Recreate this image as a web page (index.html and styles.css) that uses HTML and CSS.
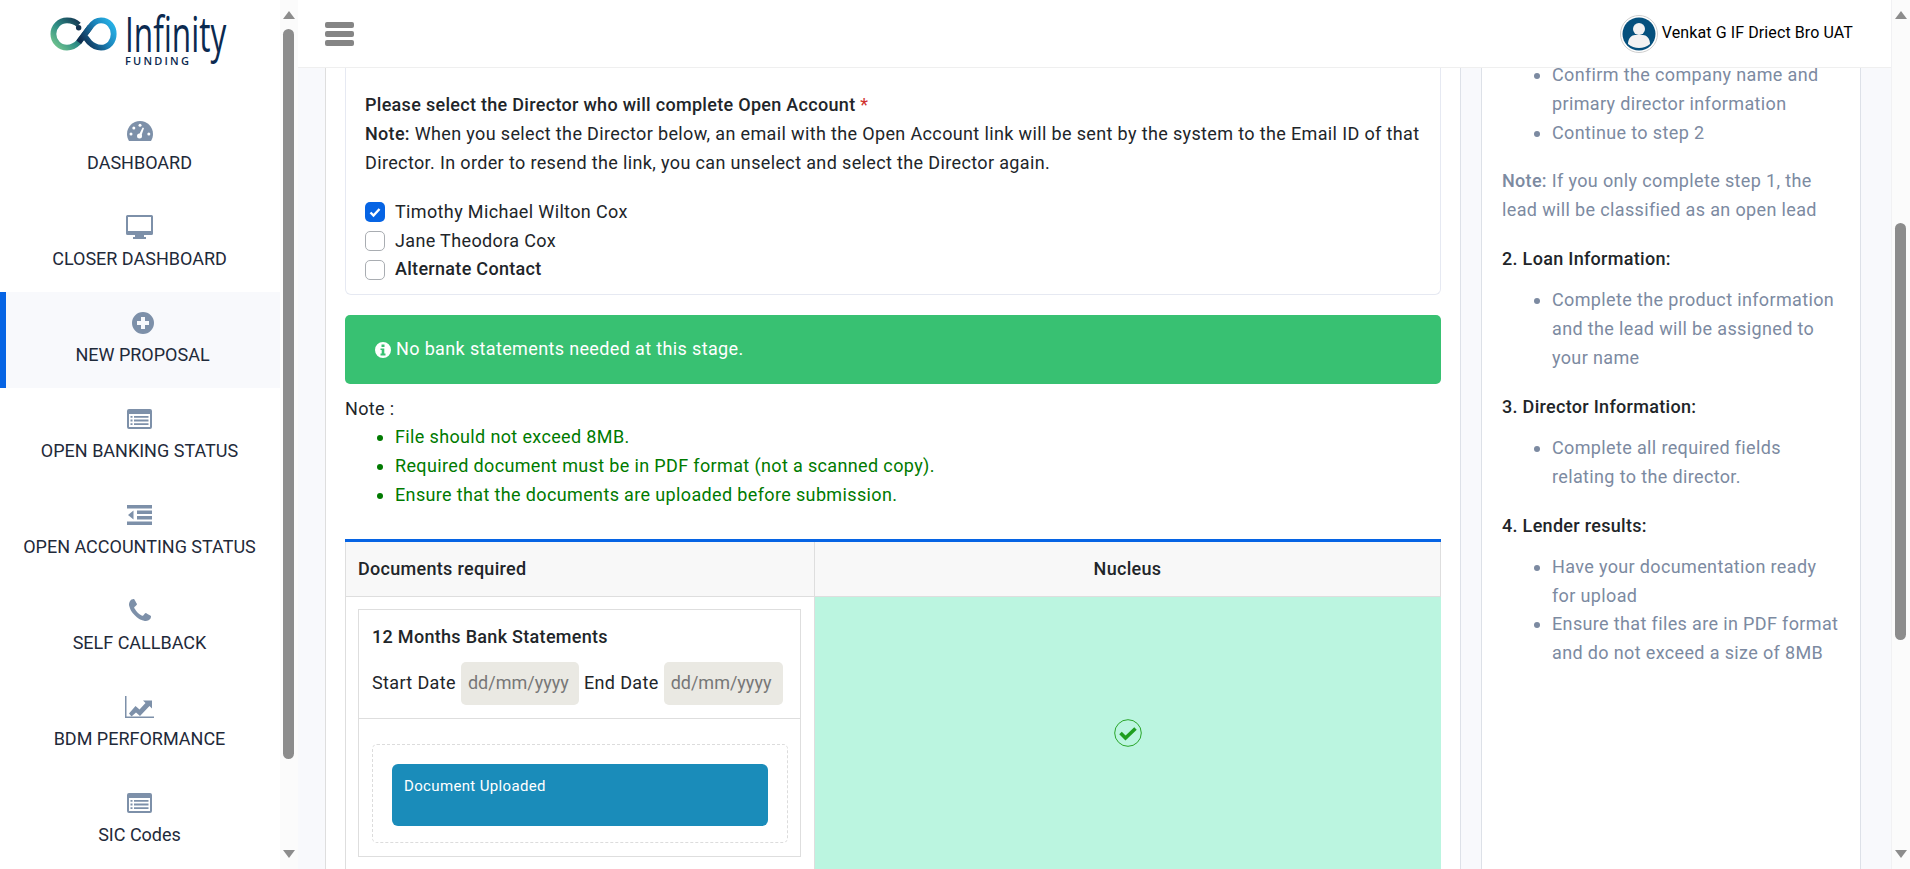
FILE: index.html
```html
<!DOCTYPE html>
<html lang="en">
<head>
<meta charset="utf-8">
<title>Infinity Funding</title>
<link rel="stylesheet" href="styles.css">
</head>
<body>
<aside class="sidebar">
  <div class="nav">
    <div class="logo">
      <svg class="logo-mark" viewBox="0 0 70 36" width="70" height="36" aria-hidden="true">
        <defs>
          <linearGradient id="lg1" gradientUnits="userSpaceOnUse" x1="5" y1="32" x2="32" y2="4"><stop offset="0" stop-color="#74c68e"/><stop offset=".45" stop-color="#2f8f86"/><stop offset="1" stop-color="#12304f"/></linearGradient>
          <linearGradient id="lg2" gradientUnits="userSpaceOnUse" x1="32" y1="26" x2="62" y2="6"><stop offset="0" stop-color="#0f2c4e"/><stop offset=".6" stop-color="#1b82b8"/><stop offset="1" stop-color="#26ade2"/></linearGradient>
        </defs>
        <path d="M29 8C26 5 22 3.500 17 3.500C9 3.500 3 10 3 17.500C3 25 9 31.500 17 31.500C22 31.500 26 29 29 26L41 10" fill="none" stroke="url(#lg1)" stroke-width="6"/>
        <path d="M29 26L41 10C44 6 48 3.500 52 3.500C60 3.500 65 10 65 17.500C65 25 60 31.500 52 31.500C47 31.500 43 29 40 26L36 21" fill="none" stroke="url(#lg2)" stroke-width="6"/>
        <circle cx="29" cy="11" r="2.800" fill="#14324f"/>
      </svg>
      <div class="logo-type">
        <span class="logo-name">Infinity</span>
        <span class="logo-sub">FUNDING</span>
      </div>
    </div>
    <a class="nav-item">
      <svg class="ico" viewBox="0 0 26 20" width="26" height="20"><path d="M13 0C5.800 0 0 5.800 0 13c0 2.500.7 4.900 2 7h22c1.300-2.100 2-4.500 2-7C26 5.800 20.200 0 13 0z"/><g fill="#fff"><circle cx="4" cy="13" r="1.500"/><circle cx="6.800" cy="7" r="1.500"/><circle cx="13" cy="4.200" r="1.500"/><circle cx="21.800" cy="13" r="1.500"/><circle cx="12.500" cy="15" r="2.500"/><path d="M15.600 6.500l1.400.4-2.900 8.500-2.400-.8z"/></g></svg>
      <span>DASHBOARD</span>
    </a>
    <a class="nav-item">
      <svg class="ico" viewBox="0 0 27 24" width="27" height="24"><path fill-rule="evenodd" d="M1.500 0h24A1.500 1.500 0 0 1 27 1.500v17a1.500 1.500 0 0 1-1.500 1.500h-24A1.500 1.500 0 0 1 0 18.500v-17A1.500 1.500 0 0 1 1.500 0zM2 2v14h23V2z"/><path d="M9 20h9v2h2v2H7v-2h2z"/></svg>
      <span>CLOSER DASHBOARD</span>
    </a>
    <a class="nav-item active">
      <svg class="ico" viewBox="0 0 22 22" width="22" height="22"><path fill-rule="evenodd" d="M11 0a11 11 0 1 1 0 22a11 11 0 0 1 0-22zM9 5v4H5v4h4v4h4v-4h4V9h-4V5z"/></svg>
      <span>NEW PROPOSAL</span>
    </a>
    <a class="nav-item">
      <svg class="ico" viewBox="0 0 25 20" width="25" height="20"><path fill-rule="evenodd" d="M2 0h21a2 2 0 0 1 2 2v16a2 2 0 0 1-2 2H2a2 2 0 0 1-2-2V2a2 2 0 0 1 2-2zM2 5v13h21V5z"/><path d="M3.500 7h2v1.800h-2zM7 7h14.500v1.800H7zM3.500 10.600h2v1.800h-2zM7 10.600h14.500v1.800H7zM3.500 14.200h2V16h-2zM7 14.200h14.500V16H7z"/></svg>
      <span>OPEN BANKING STATUS</span>
    </a>
    <a class="nav-item">
      <svg class="ico" viewBox="0 0 25 20" width="25" height="20"><path d="M0 0h25v3.500H0zM10 5.500h15V9H10zM10 11h15v3.500H10zM0 16.500h25V20H0zM6.500 5.500v9L1 10z"/></svg>
      <span>OPEN ACCOUNTING STATUS</span>
    </a>
    <a class="nav-item">
      <svg class="ico" viewBox="0 256 1408 1280" width="22" height="20"><path d="M1408 1240q0 27-10 70.500t-21 68.500q-21 50-122 106-94 51-186 51-27 0-53-3.500t-57.500-12.500-47-14.500-55.500-20.500-49-18q-98-35-175-83-127-79-264-216t-216-264q-48-77-83-175-3-9-18-49t-20.500-55.500-14.500-47-12.500-57.500-3.500-53q0-92 51-186 56-101 106-122 25-11 68.500-21t70.500-10q14 0 21 3 18 6 53 76 11 19 30 54t35 63.500 31 53.500q3 4 17.500 25t21.500 35.500 7 28.500q0 20-28.500 50t-62 55-62 53-28.500 46q0 9 5 22.500t8.500 20.500 14 24 11.500 19q76 137 174 235t235 174q2 1 19 11.500t24 14 20.500 8.500 22.500 5q18 0 46-28.500t53-62 55-62 50-28.500q14 0 28.500 7t35.500 21.500 25 17.500q25 15 53.500 31t63.500 35 54 30q70 35 76 53 3 7 3 21z"/></svg>
      <span>SELF CALLBACK</span>
    </a>
    <a class="nav-item">
      <svg class="ico" viewBox="0 0 29 22" width="29" height="22"><path d="M0 0h1.500v20.500H29V22H0z"/><path d="M4 17.500l6.500-7.500 4 3.500 6-6.500-2.500-2.500H27v8l-2.500-2.500-9.500 10-4-3.500-4.500 4z"/></svg>
      <span>BDM PERFORMANCE</span>
    </a>
    <a class="nav-item">
      <svg class="ico" viewBox="0 0 25 20" width="25" height="20"><path fill-rule="evenodd" d="M2 0h21a2 2 0 0 1 2 2v16a2 2 0 0 1-2 2H2a2 2 0 0 1-2-2V2a2 2 0 0 1 2-2zM2 5v13h21V5z"/><path d="M3.500 7h2v1.800h-2zM7 7h14.500v1.800H7zM3.500 10.600h2v1.800h-2zM7 10.600h14.500v1.800H7zM3.500 14.200h2V16h-2zM7 14.200h14.500V16H7z"/></svg>
      <span>SIC Codes</span>
    </a>
  </div>
  <div class="scrollbar scrollbar-nav">
    <i class="arrow-up"></i>
    <i class="thumb"></i>
    <i class="arrow-down"></i>
  </div>
</aside>

<div class="main">
  <header class="topbar">
    <div class="burger"><i></i><i></i><i></i></div>
    <div class="user">
      <svg class="avatar" viewBox="0 0 38 38" width="38" height="38"><circle cx="19" cy="19" r="18.500" fill="#fff" stroke="#cfcfcf"/><circle cx="19" cy="19" r="16.500" fill="#05507d"/><circle cx="19" cy="14" r="6" fill="#f2f2f2"/><path d="M8 29c0-6 4-9 7-9h8c3 0 7 3 7 9-3 2.500-7 4-11 4s-8-1.500-11-4z" fill="#f2f2f2"/></svg>
      <span>Venkat G IF Driect Bro UAT</span>
    </div>
  </header>
  <div class="workspace">
    <section class="center">
      <div class="director-card">
        <p class="line strong">Please select the Director who will complete Open Account <em>*</em></p>
        <p class="line"><strong>Note:</strong> When you select the Director below, an email with the Open Account link will be sent by the system to the Email ID of that Director. In order to resend the link, you can unselect and select the Director again.</p>
        <div class="checks">
          <label class="check"><i class="box on"><svg viewBox="0 0 20 20" width="20" height="20"><path d="M5.500 10.500l3 3 6-6.500" fill="none" stroke="#fff" stroke-width="2.400"/></svg></i>Timothy Michael Wilton Cox</label>
          <label class="check"><i class="box"></i>Jane Theodora Cox</label>
          <label class="check strong"><i class="box"></i>Alternate Contact</label>
        </div>
      </div>

      <div class="alert">
        <svg viewBox="0 0 16 16" width="16" height="16"><path fill="#fff" fill-rule="evenodd" d="M8 0a8 8 0 1 1 0 16A8 8 0 0 1 8 0zM6.500 2.500v2.500h3V2.500zM5.500 6.500v1.600h1.200v3.500H5.500v1.800h5v-1.800H9.300V6.500z"/></svg>
        <span>No bank statements needed at this stage.</span>
      </div>

      <p class="line note-title">Note :</p>
      <ul class="note-list">
        <li>File should not exceed 8MB.</li>
        <li>Required document must be in PDF format (not a scanned copy).</li>
        <li>Ensure that the documents are uploaded before submission.</li>
      </ul>

      <div class="docs">
        <div class="docs-head">
          <div class="docs-th left">Documents required</div>
          <div class="docs-th right">Nucleus</div>
        </div>
        <div class="docs-body">
          <div class="docs-left">
            <div class="doc-box">
              <div class="doc-top">
                <h4>12 Months Bank Statements</h4>
                <div class="dates">
                  <span>Start Date</span><span class="date">dd/mm/yyyy</span>
                  <span>End Date</span><span class="date">dd/mm/yyyy</span>
                </div>
              </div>
              <div class="doc-bottom">
                <div class="dropzone">
                  <div class="uploaded">Document Uploaded</div>
                </div>
              </div>
            </div>
          </div>
          <div class="docs-right">
            <svg viewBox="0 0 28 28" width="28" height="28"><circle cx="14" cy="14" r="13.300" fill="none" stroke="#2aa52a" stroke-width="1"/><path d="M6.500 14l5 5 10-9.500" fill="none" stroke="#1f9e1f" stroke-width="3.600"/></svg>
          </div>
        </div>
      </div>
    </section>

    <aside class="help">
      <ul class="help-list first">
        <li>Confirm the company name and primary director information</li>
        <li>Continue to step 2</li>
      </ul>
      <p class="help-note"><strong>Note:</strong> If you only complete step 1, the lead will be classified as an open lead</p>
      <h5>2. Loan Information:</h5>
      <ul class="help-list">
        <li>Complete the product information and the lead will be assigned to your name</li>
      </ul>
      <h5>3. Director Information:</h5>
      <ul class="help-list">
        <li>Complete all required fields relating to the director.</li>
      </ul>
      <h5>4. Lender results:</h5>
      <ul class="help-list">
        <li>Have your documentation ready for upload</li>
        <li>Ensure that files are in PDF format and do not exceed a size of 8MB</li>
      </ul>
    </aside>
  </div>
</div>

<div class="scrollbar scrollbar-page">
  <i class="arrow-up"></i>
  <i class="thumb"></i>
  <i class="arrow-down"></i>
</div>
</body>
</html>
```

FILE: styles.css
```css
* { box-sizing: border-box; }
html, body { height: 100%; }
body {
  margin: 0;
  display: flex;
  overflow: hidden;
  background: #f8f9fc;
  color: #212529;
  font: 18px/28.800px Roboto, "Liberation Sans", sans-serif;
  letter-spacing: .36px;
}
p, h4, h5, ul { margin: 0; }

/* sidebar */
.sidebar { width: 298px; flex: none; display: flex; height: 869px; }
.nav { width: 280px; background: #fff; flex: none; letter-spacing: 0; }
.logo { height: 100px; display: flex; padding: 15px 0 0 50px; gap: 6px; align-items: flex-start; }
.logo-mark { flex: none; margin-top: 2px; width: 69px; height: 35px; }
.logo-type { display: flex; flex-direction: column; color: #0b2a50; }
.logo-name {
  font: 500 49px/36px "Open Sans", sans-serif;
  transform: scaleX(.645);
  transform-origin: left top;
  width: 103px;
  white-space: nowrap;
}
.logo-sub {
  font: 600 11px/11px "Open Sans", sans-serif;
  letter-spacing: 2.200px;
  margin-top: 4px;
}
.nav-item {
  height: 96px;
  display: flex;
  flex-direction: column;
  align-items: center;
  border-left: 6px solid transparent;
  padding: 19px 1px 0 0;
  margin-left: -6px;
  white-space: nowrap;
  color: #1f2a3a;
}
.nav-item.active {
  background: #f8f9fc;
  border-left-color: #0664e4;
  margin-left: 0;
}
.nav-item span { margin-top: 5px; line-height: 29px; }
.nav-item .ico { fill: #7d90a9; height: 24px; flex: none; }

/* scrollbars */
.scrollbar { width: 18px; flex: none; display: flex; flex-direction: column; align-items: center; background: #fbfbfb; height: 869px; }
.scrollbar .thumb { width: 11px; background: #8c8c8c; border-radius: 6px; }
.arrow-up, .arrow-down { width: 0; height: 0; border-left: 6px solid transparent; border-right: 6px solid transparent; }
.arrow-up { border-bottom: 8px solid #8c8c8c; margin-top: 11px; }
.arrow-down { border-top: 8px solid #8c8c8c; margin-top: auto; margin-bottom: 11px; }
.scrollbar-nav { padding-right: 1px; }
.scrollbar-nav .thumb { height: 730px; margin-top: 10px; }
.scrollbar-page { width: 19px; box-shadow: inset 1px 0 0 #f1f1f3; }
.scrollbar-page .thumb { height: 417px; margin-top: 204px; }

/* main */
.main { flex: 1; min-width: 0; display: flex; flex-direction: column; height: 869px; }
.topbar {
  height: 68px;
  flex: none;
  background: #fff;
  border-bottom: 1px solid #efefef;
  display: flex;
  align-items: center;
  justify-content: space-between;
  padding: 0 38px 0 27px;
}
.burger { display: flex; flex-direction: column; gap: 3px; width: 29px; margin-top: 1px; }
.burger i { height: 6px; background: #858585; border-radius: 2px; }
.user { display: flex; align-items: center; gap: 4px; font-size: 16px; letter-spacing: .1px; color: #000; }
.avatar { flex: none; }

.workspace { flex: 1; min-height: 0; display: flex; overflow: hidden; padding-left: 27px; gap: 20px; }
.center {
  width: 1136px;
  flex: none;
  background: #fff;
  border-left: 1px solid #dedede;
  border-right: 1px solid #dde1e8;
  padding: 0 19px;
}
.director-card {
  height: 227px;
  border: 1px solid #e6e9f2;
  border-top: 0;
  border-radius: 0 0 6px 6px;
  padding: 23px 19px 0;
}
.strong, strong { font-weight: 500; letter-spacing: .3px; }
.line em { color: #d0312d; font-style: normal; font-weight: 400; }
.checks { margin-top: 20.500px; }
.check { display: flex; align-items: center; gap: 10px; height: 28.800px; }
.box { width: 20px; height: 20px; border: 1px solid #a9adb2; border-radius: 5px; background: #fff; display: block; flex: none; }
.box.on { background: #0664e4; border: 0; }
.box svg { display: block; }

.alert {
  margin-top: 20px;
  height: 69px;
  background: #38c172;
  color: #fff;
  border-radius: 5px;
  display: flex;
  align-items: center;
  gap: 5px;
  padding-left: 30px;
}
.note-title { margin-top: 10.500px; }
.note-list { color: #007a00; padding-left: 50px; }

.docs { margin-top: 29.300px; border-top: 3px solid #0664e4; }
.docs-head { display: flex; height: 55px; background: #f8f8f8; border: 1px solid #dedede; border-width: 0 1px 1px; }
.docs-th { font-weight: 500; letter-spacing: .3px; line-height: 54px; }
.docs-th.left { width: 469px; padding-left: 12px; border-right: 1px solid #dedede; }
.docs-th.right { flex: 1; text-align: center; }
.docs-body { display: flex; height: 400px; border-left: 1px solid #dedede; }
.docs-left { width: 469px; padding: 12px 13px 0 12px; border-right: 1px solid #dedede; flex: none; }
.docs-right { flex: 1; background: #bbf5e0; display: flex; justify-content: center; padding-top: 122px; }
.doc-box { height: 248px; border: 1px solid #dedede; }
.doc-top { height: 109px; border-bottom: 1px solid #dedede; padding: 13px 13px 0; }
.doc-top h4 { font-size: 18px; font-weight: 500; letter-spacing: .3px; line-height: 28px; }
.dates { display: flex; align-items: center; height: 43px; margin-top: 11px; white-space: nowrap; }
.date {
  height: 43px;
  line-height: 41px;
  width: 118px;
  margin: 0 5px;
  background: #eae9e3;
  color: #777;
  letter-spacing: 0;
  border-radius: 5px;
  padding-left: 7px;
}
.date:last-child { width: 119px; margin-right: 0; }
.doc-bottom { padding: 25px 12px 0 13px; }
.dropzone { height: 99px; border: 1px dashed #dcdcdc; border-radius: 5px; padding: 19px; }
.uploaded { height: 62px; background: #1a8cba; color: #fff; border-radius: 6px; font-size: 15px; letter-spacing: .35px; line-height: 20px; padding: 12px 12px; }

/* help */
.help {
  width: 380px;
  flex: none;
  background: #fff;
  border: 1px solid #dde1e8;
  border-width: 0 1px;
  padding: 0 20px;
  color: #7c8aa1;
}
.help-list { padding-left: 50px; margin-top: 12.500px; }
.help-list.first { margin-top: -7px; }
.help-note { margin-top: 20px; }
.help h5 { font-size: 18px; font-weight: 500; letter-spacing: .3px; line-height: 28.800px; color: #212529; margin-top: 20px; }
```
